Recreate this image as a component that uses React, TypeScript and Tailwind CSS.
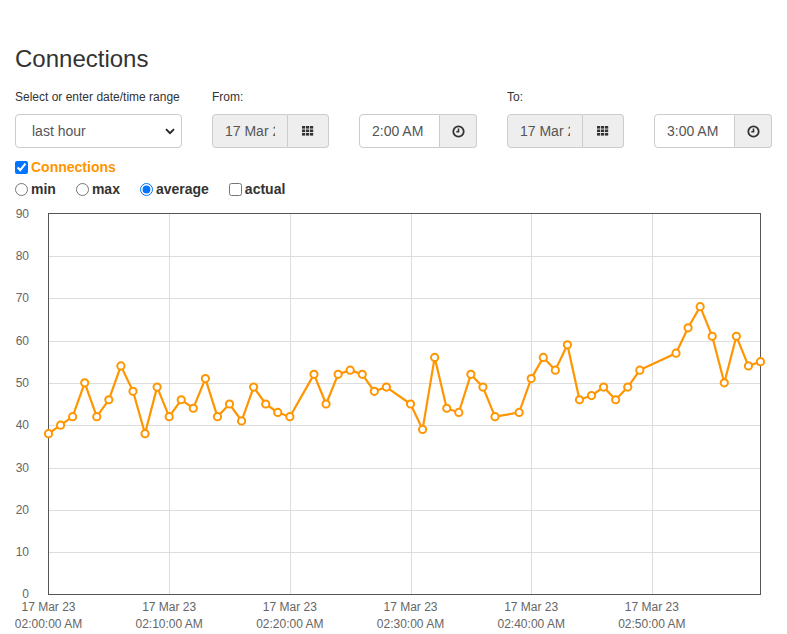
import React from 'react'

// Connections page: date/time range controls above a minute-by-minute line chart.

const values: [number, number][] = [
  [0, 38], [1, 40], [2, 42], [3, 50], [4, 42], [5, 46], [6, 54], [7, 48], [8, 38], [9, 49],
  [10, 42], [11, 46], [12, 44], [13, 51], [14, 42], [15, 45], [16, 41], [17, 49], [18, 45], [19, 43],
  [20, 42], [22, 52], [23, 45], [24, 52], [25, 53], [26, 52], [27, 48], [28, 49], [30, 45], [31, 39],
  [32, 56], [33, 44], [34, 43], [35, 52], [36, 49], [37, 42], [39, 43], [40, 51], [41, 56], [42, 53],
  [43, 59], [44, 46], [45, 47], [46, 49], [47, 46], [48, 49], [49, 53], [52, 57], [53, 63], [54, 68],
  [55, 61], [56, 50], [57, 61], [58, 54], [59, 55],
]

const X0 = 48.5
const X1 = 760.5
const Y0 = 394.5 // value 0
const YTOP = 13.5 // value 90
const px = (m: number) => X0 + (m * (X1 - X0)) / 59
const py = (v: number) => Y0 - (v * (Y0 - YTOP)) / 90

const ORANGE = '#ff9500'

function GridIcon() {
  return (
    <svg width="12" height="10" viewBox="0 0 12 10" fill="#333">
      {[0, 4, 8].map((x) =>
        [0, 3.5, 7].map((y) => <rect key={`${x}-${y}`} x={x} y={y} width="3.2" height="2.6" />),
      )}
    </svg>
  )
}

function ClockIcon() {
  return (
    <svg width="13" height="13" viewBox="0 0 13 13" fill="none" stroke="#333">
      <circle cx="6.5" cy="6.5" r="5.2" strokeWidth="1.8" />
      <path d="M6.5 3.5v3.3H4.3" strokeWidth="1.6" />
    </svg>
  )
}

function AddonGroup({
  value,
  readOnly,
  icon,
  addonWidth,
}: {
  value: string
  readOnly?: boolean
  icon: React.ReactNode
  addonWidth: 'narrow' | 'wide'
}) {
  return (
    <div className="flex h-[34px] w-full">
      <input
        readOnly
        value={value}
        className={`h-full min-w-0 flex-1 rounded-l-[4px] border border-[#ccc] px-3 text-sm text-[#555] outline-none ${
          readOnly ? 'bg-[#eee]' : 'bg-white'
        }`}
      />
      <div
        className={`flex shrink-0 items-center justify-center rounded-r-[4px] border border-l-0 border-[#ccc] bg-[#eee] ${
          addonWidth === 'wide' ? 'w-[41px]' : 'w-[37px]'
        }`}
      >
        {icon}
      </div>
    </div>
  )
}

function Chart() {
  const yTicks = [0, 10, 20, 30, 40, 50, 60, 70, 80, 90]
  const xTicks = [0, 10, 20, 30, 40, 50]
  const times = ['02:00:00 AM', '02:10:00 AM', '02:20:00 AM', '02:30:00 AM', '02:40:00 AM', '02:50:00 AM']
  const line = values.map(([m, v]) => `${px(m).toFixed(1)},${py(v).toFixed(1)}`).join(' ')
  return (
    <svg width="787" height="434" className="block" style={{ fontFamily: '"Liberation Sans", Arial, sans-serif' }}>
      {yTicks.slice(1, -1).map((v) => (
        <line key={v} x1={X0} x2={X1} y1={Math.round(py(v)) + 0.5} y2={Math.round(py(v)) + 0.5} stroke="#ddd" />
      ))}
      {xTicks.slice(1).map((m) => (
        <line key={m} x1={Math.round(px(m)) + 0.5} x2={Math.round(px(m)) + 0.5} y1={YTOP} y2={Y0} stroke="#ddd" />
      ))}
      <rect x={X0} y={YTOP} width={X1 - X0} height={Y0 - YTOP} fill="none" stroke="#555" />
      {yTicks.map((v) => (
        <text key={v} x="29" y={py(v) + (v === 0 ? 3 : 4)} textAnchor="end" fontSize="12" fill="#666">
          {v}
        </text>
      ))}
      {xTicks.map((m, i) => (
        <g key={m} fontSize="12" fill="#666" textAnchor="middle">
          <text x={px(m)} y="411">17 Mar 23</text>
          <text x={px(m)} y="428">{times[i]}</text>
        </g>
      ))}
      <polyline points={line} fill="none" stroke={ORANGE} strokeWidth="2.2" strokeLinejoin="round" />
      {values.map(([m, v]) => (
        <circle key={m} cx={px(m)} cy={py(v)} r="3.6" fill="#fff" stroke={ORANGE} strokeWidth="2" />
      ))}
    </svg>
  )
}

export default function App() {
  return (
    <div className="w-[787px] bg-white font-['Liberation_Sans',Arial,sans-serif] text-sm text-[#333]">
      <h2 className="px-[15px] pt-[46px] text-[24px] leading-[26px] text-[#333]">Connections</h2>

      <div className="mt-[17px] grid grid-cols-[197px_147px_148px_147px_148px]">
        <div className="px-[15px]">
          <label className="block text-xs leading-4">Select or enter date/time range</label>
          <div className="mt-[9px] flex h-[34px] items-center justify-between rounded-[4px] border border-[#ccc] bg-white pl-4 pr-[6px] text-sm text-[#555]">
            <span>last hour</span>
            <svg width="10" height="7" viewBox="0 0 10 7" fill="none" stroke="#222" strokeWidth="1.8">
              <path d="M1 1.2l4 4 4-4" />
            </svg>
          </div>
        </div>
        <div className="px-[15px]">
          <label className="block text-xs leading-4">From:</label>
          <div className="mt-[9px]">
            <AddonGroup value="17 Mar 2023" readOnly icon={<GridIcon />} addonWidth="wide" />
          </div>
        </div>
        <div className="px-[15px]">
          <div className="h-4" />
          <div className="mt-[9px]">
            <AddonGroup value="2:00 AM" icon={<ClockIcon />} addonWidth="narrow" />
          </div>
        </div>
        <div className="px-[15px]">
          <label className="block text-xs leading-4">To:</label>
          <div className="mt-[9px]">
            <AddonGroup value="17 Mar 2023" readOnly icon={<GridIcon />} addonWidth="wide" />
          </div>
        </div>
        <div className="px-[15px]">
          <div className="h-4" />
          <div className="mt-[9px]">
            <AddonGroup value="3:00 AM" icon={<ClockIcon />} addonWidth="narrow" />
          </div>
        </div>
      </div>

      <div className="mt-[11px] px-[15px]">
        <label className="flex items-center gap-[3px] text-sm leading-4 font-bold text-[#ff9500]">
          <input type="checkbox" defaultChecked className="m-0 size-[13px]" />
          Connections
        </label>
        <div className="mt-[6px] flex items-center gap-5 text-sm leading-4 font-bold text-[#333]">
          <label className="flex items-center gap-[3px]">
            <input type="radio" name="agg" className="m-0 size-[13px]" />
            min
          </label>
          <label className="flex items-center gap-[3px]">
            <input type="radio" name="agg" className="m-0 size-[13px]" />
            max
          </label>
          <label className="flex items-center gap-[3px]">
            <input type="radio" name="agg" defaultChecked className="m-0 size-[13px]" />
            average
          </label>
          <label className="flex items-center gap-[3px]">
            <input type="checkbox" className="m-0 size-[13px]" />
            actual
          </label>
        </div>
      </div>

      <div className="mt-[3px]">
        <Chart />
      </div>
    </div>
  )
}
